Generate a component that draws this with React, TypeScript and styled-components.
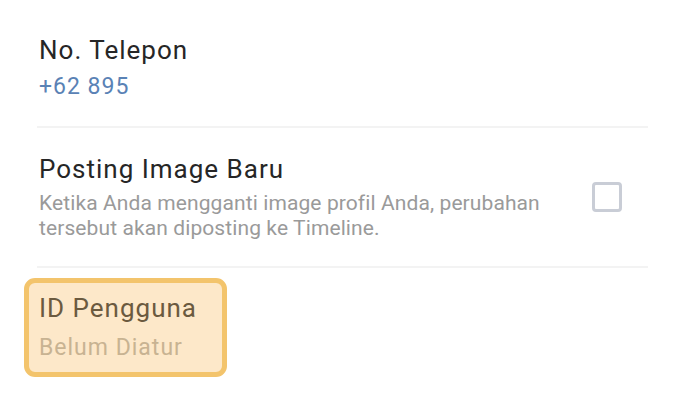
import React from "react";
import styled, { createGlobalStyle } from "styled-components";

const GlobalStyle = createGlobalStyle`
  html, body {
    margin: 0;
    padding: 0;
    background: #ffffff;
  }

  body {
    font-family: Roboto, "Noto Sans", Arial, sans-serif;
    -webkit-font-smoothing: antialiased;
  }
`;

const List = styled.div`
  width: 611px;
  margin-left: 37px;
  padding-top: 9px;
`;

const Item = styled.div<{ $last?: boolean }>`
  display: flex;
  align-items: center;
  padding: 25px 0 25px 2px;
  border-bottom: ${({ $last }) => ($last ? "none" : "2px solid #f3f3f3")};
`;

const Body = styled.div`
  flex: 1;
  min-width: 0;
`;

const Title = styled.div`
  font-size: 26px;
  line-height: 32px;
  letter-spacing: 1px;
  color: #262626;
`;

const Value = styled.div<{ $muted?: boolean }>`
  margin-top: ${({ $muted }) => ($muted ? "10px" : "7px")};
  font-size: 23px;
  line-height: 28px;
  letter-spacing: 1px;
  color: ${({ $muted }) => ($muted ? "#c8b392" : "#5a82b5")};
`;

const Desc = styled.div`
  margin-top: 6px;
  max-width: 530px;
  font-size: 21px;
  line-height: 25px;
  letter-spacing: 0.1px;
  color: #9a9a9a;
`;

const Check = styled.span`
  flex-shrink: 0;
  width: 24px;
  height: 24px;
  margin-right: 26px;
  border: 3px solid #c9cdd6;
  border-radius: 4px;
  box-sizing: content-box;
`;

const Highlight = styled.div`
  box-sizing: border-box;
  width: 203px;
  margin-left: -15px;
  margin-top: -15px;
  padding: 9px 10px 10px 10px;
  border: 5px solid #f3c46c;
  border-radius: 11px;
  background: #fde8c9;

  ${Title} {
    color: #6b5a3f;
  }
`;

function App() {
  return (
    <>
      <GlobalStyle />
      <List>
        <Item>
          <Body>
            <Title>No. Telepon</Title>
            <Value>+62 895</Value>
          </Body>
        </Item>

        <Item>
          <Body>
            <Title>Posting Image Baru</Title>
            <Desc>
              Ketika Anda mengganti image profil Anda, perubahan tersebut akan
              diposting ke Timeline.
            </Desc>
          </Body>
          <Check />
        </Item>

        <Item $last>
          <Body>
            <Highlight>
              <Title>ID Pengguna</Title>
              <Value $muted>Belum Diatur</Value>
            </Highlight>
          </Body>
        </Item>
      </List>
    </>
  );
}

export default App;
